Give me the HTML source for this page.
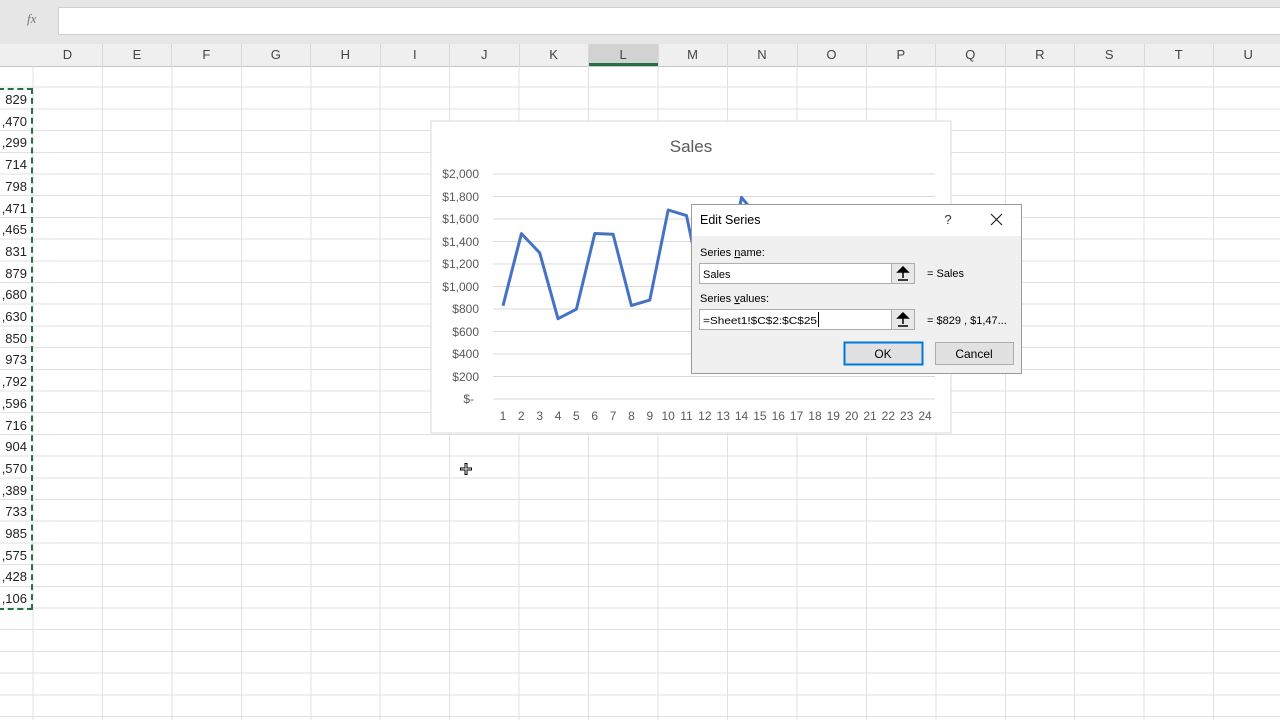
<!DOCTYPE html>
<html><head><style>
body{margin:0;width:1280px;height:720px;overflow:hidden;background:#fff;font-family:"Liberation Sans",sans-serif;position:relative}
.top{position:absolute;left:0;top:0;width:1280px;height:44px;background:#e6e6e6}
.fx{position:absolute;left:58px;top:7px;width:1222px;height:26px;background:#fff;border:1px solid #d0d0d0}
.hdr{position:absolute;left:0;top:44px;width:1280px;height:22px;background:#efefef;border-bottom:1px solid #c6c6c6}
.grid{position:absolute;left:0;top:66px;width:1280px;height:654px;
background-image:repeating-linear-gradient(to right,transparent 0 32.5px,#e1e1e1 32.5px 33.5px,transparent 33.5px 69.45px),repeating-linear-gradient(to bottom,transparent 0 20.7px,#e1e1e1 20.7px 21.7px);}
.ch{position:absolute;top:44px;height:22px;line-height:22px;font-size:13px;color:#444;text-align:center;width:69px;border-right:1px solid #d8d8d8}
.num{position:absolute;left:0;width:27px;text-align:right;font-size:13px;color:#222}
</style></head><body>
<div class="top"></div>
<div class="fx"></div>
<div style="position:absolute;left:27px;top:11px;font-size:13px;font-style:italic;color:#777;font-family:'Liberation Serif',serif">fx</div>
<div class="hdr"></div>
<div class="grid"></div>
<div style="position:absolute;left:588px;top:63px;width:70px;height:3px;background:#217346"></div>
<div style="position:absolute;left:588px;top:44px;width:70px;height:19px;background:#d2d2d2"></div>
<div id="cols"></div>
<script>
var L="DEFGHIJKLMNOPQRSTU",h="";
for(var i=0;i<L.length;i++){h+='<div class="ch" style="left:'+(33+i*69.45)+'px">'+L[i]+'</div>';}
var v=["829",",470",",299","714","798",",471",",465","831","879",",680",",630","850","973",",792",",596","716","904",",570",",389","733","985",",575",",428",",106"];
for(var j=0;j<v.length;j++){h+='<div class="num" style="top:'+(92+j*21.7)+'px">'+v[j]+'</div>';}
document.getElementById('cols').innerHTML=h;
</script>
<div style="position:absolute;left:-2px;top:88px;width:33px;height:518px;border:2px dashed #217346;border-left:none"></div>
<svg style="position:absolute;left:0;top:0" width="1280" height="720">
<rect x="431" y="121" width="520" height="312" fill="#fff" stroke="#d9d9d9"/>
<text x="691" y="152" font-size="17" fill="#595959" text-anchor="middle" font-family="Liberation Sans">Sales</text>
<g stroke="#d9d9d9" stroke-width="1">
<line x1="493" x2="935" y1="174" y2="174"/><line x1="493" x2="935" y1="196.5" y2="196.5"/><line x1="493" x2="935" y1="219" y2="219"/><line x1="493" x2="935" y1="241.5" y2="241.5"/><line x1="493" x2="935" y1="264" y2="264"/><line x1="493" x2="935" y1="286.5" y2="286.5"/><line x1="493" x2="935" y1="309" y2="309"/><line x1="493" x2="935" y1="331.5" y2="331.5"/><line x1="493" x2="935" y1="354" y2="354"/><line x1="493" x2="935" y1="376.5" y2="376.5"/><line x1="493" x2="935" y1="399" y2="399"/></g>
<g font-size="12" fill="#595959" text-anchor="end" font-family="Liberation Sans">
<text x="479" y="178">$2,000</text><text x="479" y="201">$1,800</text><text x="479" y="223">$1,600</text><text x="479" y="246">$1,400</text><text x="479" y="268">$1,200</text><text x="479" y="291">$1,000</text><text x="479" y="313">$800</text><text x="479" y="336">$600</text><text x="479" y="358">$400</text><text x="479" y="381">$200</text><text x="474" y="403">$-</text></g>
<g font-size="12" fill="#595959" text-anchor="middle" font-family="Liberation Sans" id="xl"></g>
<polyline fill="none" stroke="#4472c4" stroke-width="3" stroke-linejoin="round" points="503,305.7 521.4,233.6 539.7,252.9 558,318.7 576.4,309.2 594.8,233.5 613.1,234.2 631.4,305.5 649.8,300.1 668.2,210 686.5,215.6 704.9,303.4 723.2,289.5 741.5,197.4 759.9,219.4 778.2,318.4 796.6,297.3 815,222.4 833.3,242.7 851.7,316.5 870,288.2 888.4,221.8 906.7,238.4 925,274.6"/>
<rect x="691.5" y="204.5" width="330" height="169" fill="#f0f0f0" stroke="#9a9a9a"/>
<rect x="692" y="205" width="329" height="31" fill="#fff"/>
<text x="700" y="224" font-size="12.5" fill="#000" font-family="Liberation Sans">Edit Series</text>
<text x="948" y="224" font-size="13" fill="#333" text-anchor="middle" font-family="Liberation Sans">?</text>
<path d="M991 214 L1002 225 M1002 214 L991 225" stroke="#222" stroke-width="1.2"/>
<g font-size="11" fill="#000" font-family="Liberation Sans">
<text x="700" y="256">Series <tspan text-decoration="underline">n</tspan>ame:</text>
<text x="700" y="302">Series <tspan text-decoration="underline">v</tspan>alues:</text>
<text x="927" y="277">= Sales</text>
<text x="927" y="324">=  $829 ,  $1,47...</text>
</g>
<rect x="699.5" y="263.5" width="215" height="20" fill="#fff" stroke="#adadad"/>
<rect x="891.5" y="263.5" width="23" height="20" fill="#e8e8e8" stroke="#adadad"/>
<rect x="699.5" y="309.5" width="215" height="20" fill="#fff" stroke="#adadad"/>
<rect x="891.5" y="309.5" width="23" height="20" fill="#e8e8e8" stroke="#adadad"/>
<g stroke="#000" stroke-width="1.5" fill="#000"><path d="M903 267 L898 272 L908 272 Z M903 272 V278 M898 280 H908" /><path d="M903 313 L898 318 L908 318 Z M903 318 V324 M898 326 H908"/></g>
<text x="703" y="278" font-size="11" font-family="Liberation Sans">Sales</text>
<text x="703" y="324" font-size="10.5" font-family="Liberation Sans" textLength="114" lengthAdjust="spacingAndGlyphs">=Sheet1!$C$2:$C$25</text>
<line x1="818.5" y1="312" x2="818.5" y2="327" stroke="#000"/>
<rect x="844.5" y="342.5" width="78" height="22" fill="#e1e1e1" stroke="#0078d7" stroke-width="2"/>
<rect x="935.5" y="342.5" width="78" height="22" fill="#e1e1e1" stroke="#adadad"/>
<text x="883" y="358" font-size="12" text-anchor="middle" font-family="Liberation Sans">OK</text>
<text x="974" y="358" font-size="12" text-anchor="middle" font-family="Liberation Sans">Cancel</text>
<path d="M466 463 V475 M460 469 H472" stroke="#000" stroke-width="3"/><path d="M466 464 V474 M461 469 H471" stroke="#fff" stroke-width="1"/>
</svg>
<script>
var g=document.getElementById('xl'),s='';
for(var i=1;i<=24;i++){s+='<text x="'+(503+(i-1)*18.35)+'" y="420">'+i+'</text>';}
g.innerHTML=s;
</script>
</body></html>
